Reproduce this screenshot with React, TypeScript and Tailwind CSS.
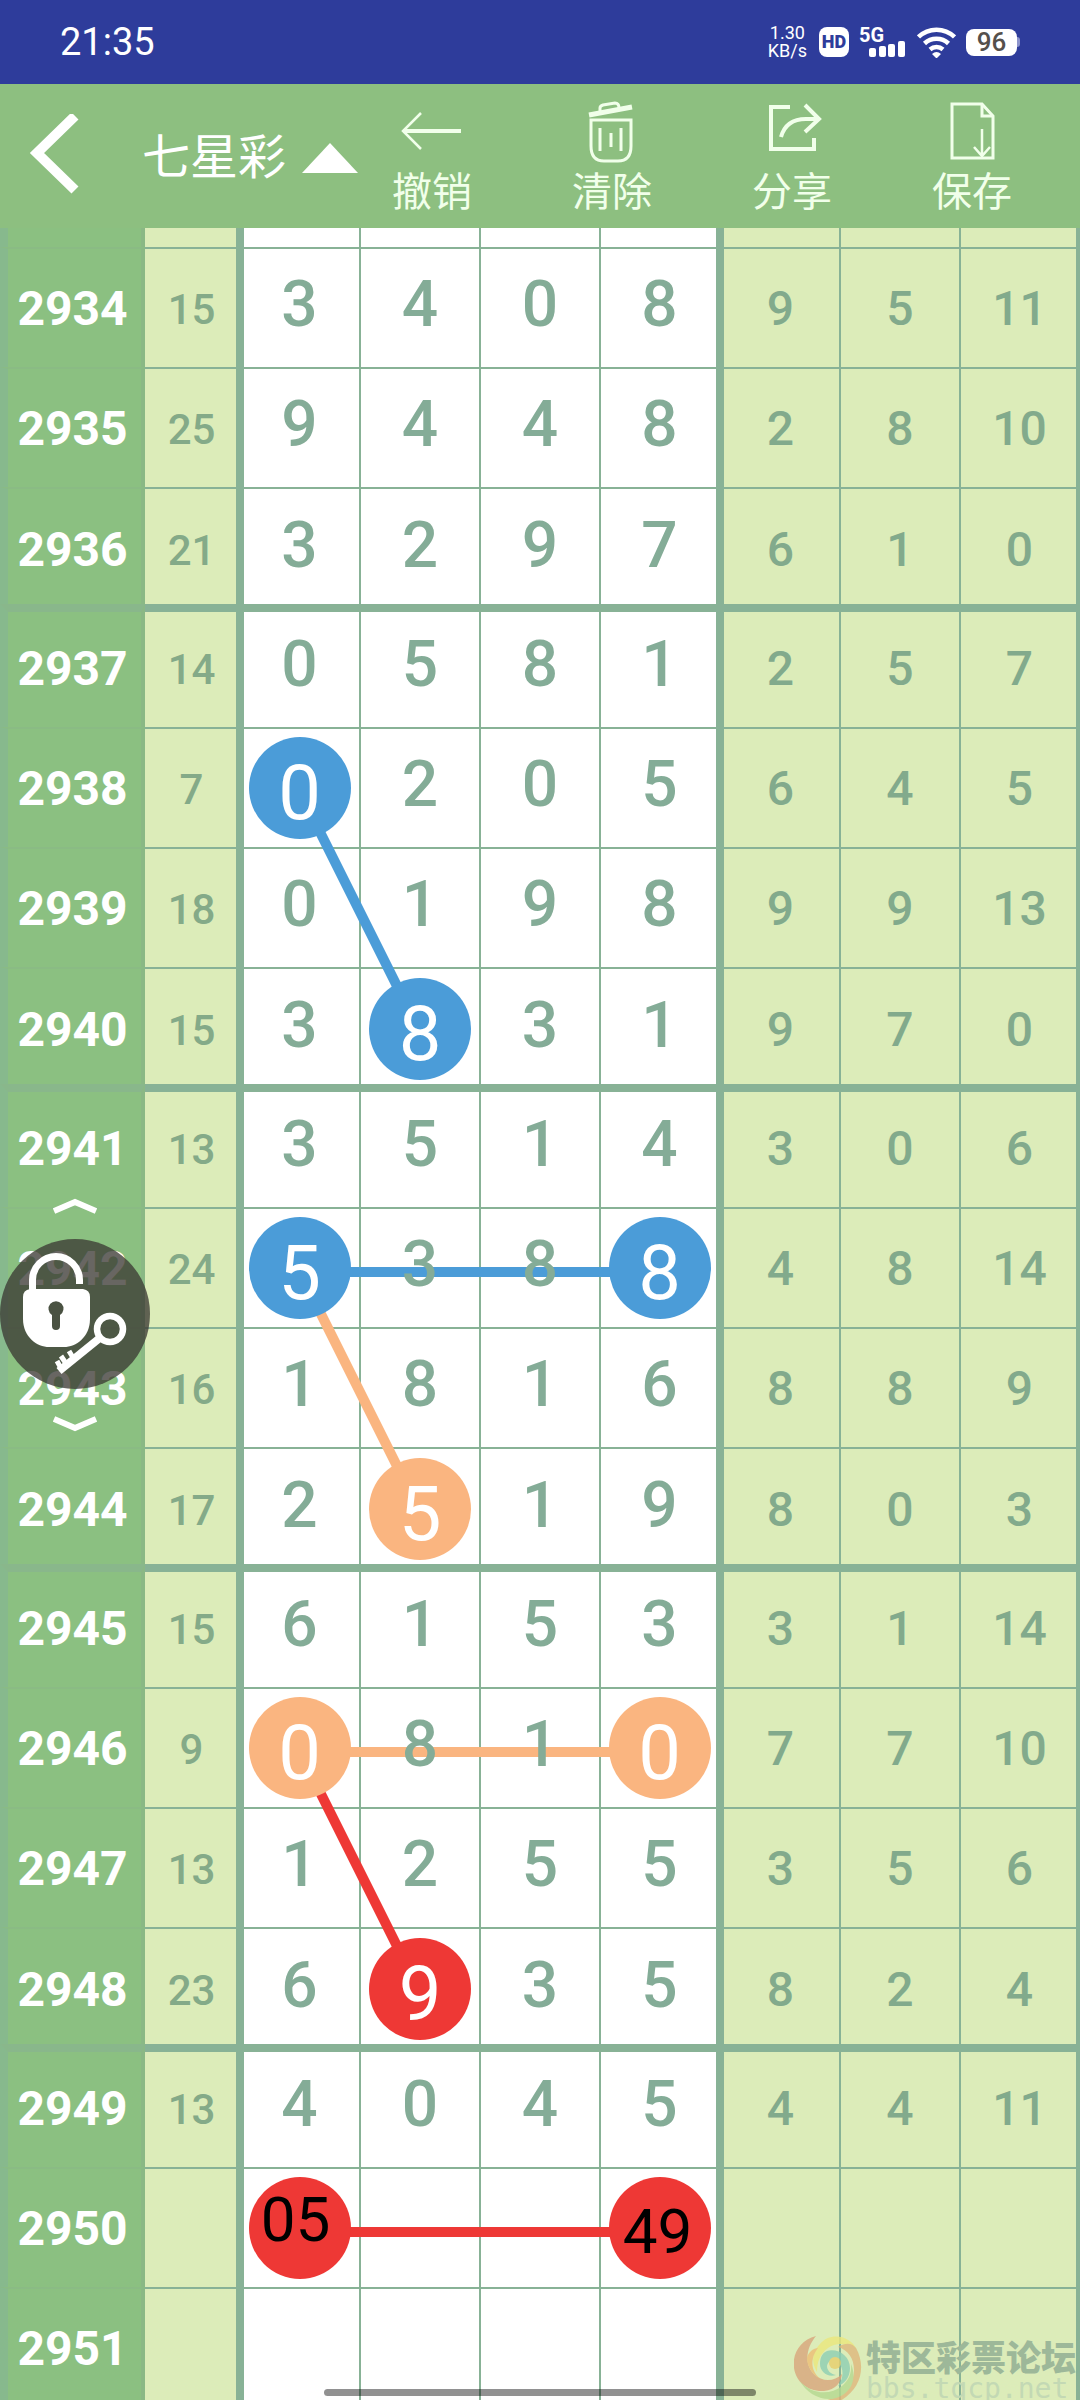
import { useState } from 'react';
import clsx from 'clsx';

type Color = 'blue' | 'orange' | 'red';

interface Draw {
  issue: number;
  sum?: number;
  main: string;
  extra: (number | string)[];
}

interface Mark {
  text: string;
  color: Color;
  note?: string;
}

const draws: Draw[] = [
  { issue: 2934, sum: 15, main: '3408', extra: [9, 5, 11] },
  { issue: 2935, sum: 25, main: '9448', extra: [2, 8, 10] },
  { issue: 2936, sum: 21, main: '3297', extra: [6, 1, 0] },
  { issue: 2937, sum: 14, main: '0581', extra: [2, 5, 7] },
  { issue: 2938, sum: 7, main: '0205', extra: [6, 4, 5] },
  { issue: 2939, sum: 18, main: '0198', extra: [9, 9, 13] },
  { issue: 2940, sum: 15, main: '3831', extra: [9, 7, 0] },
  { issue: 2941, sum: 13, main: '3514', extra: [3, 0, 6] },
  { issue: 2942, sum: 24, main: '5388', extra: [4, 8, 14] },
  { issue: 2943, sum: 16, main: '1816', extra: [8, 8, 9] },
  { issue: 2944, sum: 17, main: '2519', extra: [8, 0, 3] },
  { issue: 2945, sum: 15, main: '6153', extra: [3, 1, 14] },
  { issue: 2946, sum: 9, main: '0810', extra: [7, 7, 10] },
  { issue: 2947, sum: 13, main: '1255', extra: [3, 5, 6] },
  { issue: 2948, sum: 23, main: '6935', extra: [8, 2, 4] },
  { issue: 2949, sum: 13, main: '4045', extra: [4, 4, 11] },
  { issue: 2950, main: '    ', extra: ['', '', ''] },
  { issue: 2951, main: '    ', extra: ['', '', ''] },
];

// keyed by issue-column
const initialMarks: Record<string, Mark> = {
  '2938-0': { text: '0', color: 'blue' },
  '2940-1': { text: '8', color: 'blue' },
  '2942-0': { text: '5', color: 'blue' },
  '2942-3': { text: '8', color: 'blue' },
  '2944-1': { text: '5', color: 'orange' },
  '2946-0': { text: '0', color: 'orange' },
  '2946-3': { text: '0', color: 'orange' },
  '2948-1': { text: '9', color: 'red' },
  '2950-0': { text: '05', color: 'red', note: 'pb-4 pr-2' },
  '2950-3': { text: '49', color: 'red', note: 'pt-2 pr-1' },
};

// [from issue, from column, to issue, to column, colour]
const initialLines: [number, number, number, number, Color][] = [
  [2938, 0, 2940, 1, 'blue'],
  [2942, 0, 2944, 1, 'orange'],
  [2942, 0, 2942, 3, 'blue'],
  [2946, 0, 2948, 1, 'red'],
  [2946, 0, 2946, 3, 'orange'],
  [2950, 0, 2950, 3, 'red'],
];

const fill = { blue: 'bg-[#4b9cd8]', orange: 'bg-[#fab580]', red: 'bg-[#ee3835]' };
const stroke = { blue: 'stroke-[#4b9cd8]', orange: 'stroke-[#fab580]', red: 'stroke-[#ee3835]' };

const lineX = (col: number) => `${((300 + col * 120) / 1080) * 100}%`;
const lineY = (issue: number) => 84 + (issue - 2934) * 120;

const isThick = (issue: number) => issue % 4 === 1;

function StatusBar() {
  return (
    <div className="flex h-[84px] shrink-0 items-center justify-between bg-[#2e3c9b] pl-15 pr-15 text-white">
      <span className="text-[38px] leading-none">21:35</span>
      <div className="flex items-center">
        <div className="mr-3 text-center text-[18px] leading-[18px]">
          <div>1.30</div>
          <div>KB/s</div>
        </div>
        <span className="mr-2.5 flex h-[30px] w-[30px] items-center justify-center rounded-lg bg-white text-[18px] font-black leading-none text-[#2e3c9b]">
          HD
        </span>
        <div className="relative mr-3 h-[30px] w-[46px]">
          <span className="absolute left-0 top-0 text-[20px] font-bold leading-[16px]">5G</span>
          <svg className="absolute inset-0" width="46" height="30" fill="#fff">
            <rect x="10" y="21" width="7" height="9" rx="2" />
            <rect x="20" y="19" width="7" height="11" rx="2" />
            <rect x="29" y="17" width="7" height="13" rx="2" />
            <rect x="39" y="14" width="7" height="16" rx="2" />
          </svg>
        </div>
        <svg className="mr-2.5" width="39" height="31" viewBox="0 0 39 31" fill="none" stroke="#fff" strokeWidth="4.500">
          <path d="M1.500 10a26 26 0 0 1 36 0" />
          <path d="M7.500 16.500a17.500 17.500 0 0 1 24 0" />
          <path d="M13 22.500a10 10 0 0 1 13 0" />
          <path d="M15 27q4.500-4 9 0l-4.500 4.500z" fill="#fff" stroke="none" />
        </svg>
        <span className="flex h-[27px] w-[51px] items-center justify-center rounded-lg bg-white text-[26px] font-medium leading-none text-[#55504c]">
          96
        </span>
        <span className="h-[10px] w-[3px] rounded-r bg-[#8d94cc]" />
      </div>
    </div>
  );
}

const tools = [
  {
    label: '撤销',
    icon: (
      <>
        <path d="M3 34H61" strokeWidth="4" />
        <path d="M21 16L3 34L21 52" strokeWidth="2.500" />
      </>
    ),
  },
  {
    label: '清除',
    icon: (
      <>
        <path d="M9 18L52 10" strokeWidth="5" />
        <path d="M20 15V11q0-2 3-3l12-2q4 0 4 5" strokeWidth="3" />
        <path d="M11 23H51V49Q51 64 38 64H24Q11 64 11 49Z" strokeWidth="3" />
        <path d="M20 31V54M31 36V50M41 31V54" strokeWidth="3" />
      </>
    ),
  },
  {
    label: '分享',
    icon: (
      <>
        <path d="M30 10H11V52H54V41" strokeWidth="4" />
        <path d="M21 40Q26 22 46 22H58" strokeWidth="4" />
        <path d="M45 8L59 22L45 35" strokeWidth="4" />
      </>
    ),
  },
  {
    label: '保存',
    icon: (
      <>
        <path d="M42 7H12V61H53V19Z" strokeWidth="3" />
        <path d="M42 7V19H53" strokeWidth="3" />
        <path d="M42 32V59M34 50L42 59L50 50" strokeWidth="2.500" />
      </>
    ),
  },
];

function Toolbar({ onTool }: { onTool: (label: string) => void }) {
  return (
    <header className="flex h-[144px] shrink-0 items-center bg-[#8dbf80] text-white">
      <button aria-label="返回" className="ml-7 w-[54px]">
        <svg width="54" height="84" viewBox="0 0 54 84" fill="none" stroke="#fff" strokeWidth="10">
          <path d="M47 2L9 39L47 76" />
        </svg>
      </button>
      <button className="ml-15 flex items-center gap-4 pt-1 text-[48px] leading-none">
        七星彩
        <svg width="56" height="30" viewBox="0 0 56 30" fill="#fff">
          <path d="M28 0L56 30H0Z" />
        </svg>
      </button>
      <div className="ml-auto mr-12 flex gap-15">
        {tools.map(t => (
          <button
            key={t.label}
            onClick={() => onTool(t.label)}
            className="flex w-[120px] flex-col items-center gap-2.5 text-[40px] leading-[44px] text-[#f1ffea]"
          >
            <svg className="overflow-visible" width="64" height="64" viewBox="0 0 64 64" fill="none" stroke="currentColor">
              {t.icon}
            </svg>
            {t.label}
          </button>
        ))}
      </div>
    </header>
  );
}

function MainCell({ value, mark }: { value: string; mark?: Mark }) {
  if (!mark) {
    return <span className="relative z-10 block pb-1.5 text-[64px] font-medium leading-none">{value}</span>;
  }
  return (
    <span
      className={clsx(
        'relative z-10 mx-auto flex h-[102px] w-[102px] items-center justify-center rounded-full leading-none',
        fill[mark.color],
        mark.note ? 'text-[62px] text-black' : 'pt-2.5 text-[76px] text-white',
        mark.note,
      )}
    >
      {mark.text}
    </span>
  );
}

function LockWidget() {
  const [locked, setLocked] = useState(false);
  return (
    <div className="absolute left-0 top-[963px] z-20 flex w-[150px] flex-col items-center gap-5">
      <button aria-label="上移" className="h-7">
        <svg width="44" height="28" viewBox="0 0 44 28" fill="none" stroke="#fff" strokeWidth="6">
          <path d="M1 20L22 11L43 20" />
        </svg>
      </button>
      <button
        aria-label="锁定"
        aria-pressed={locked}
        onClick={() => setLocked(!locked)}
        className="h-[150px] w-[150px] rounded-full bg-[#3a3833]/77"
      >
        <svg width="150" height="150" viewBox="0 0 150 150" fill="none" stroke="#fff">
          <path d="M32.500 54V41a23.500 23.500 0 0 1 47 0V45" strokeWidth="7" />
          <path
            d="M30 50H83Q90 51 90 58V80C90 98 76 108 64 108H49C37 108 23 98 23 80V58Q23 51 30 50Z"
            fill="#fff"
            stroke="none"
          />
          <path d="M52 76a7.500 7.500 0 1 1 8 0V87a4 4 0 0 1-8 0Z" fill="#4a5242" stroke="none" />
          <circle cx="110" cy="90" r="13" strokeWidth="6.500" />
          <path d="M101 98L59 132" strokeWidth="8" />
          <path d="M62 131L57 122M67 126L61 117M75 122L69 112" strokeWidth="5" />
        </svg>
      </button>
      <button aria-label="下移" className="h-7">
        <svg width="44" height="28" viewBox="0 0 44 28" fill="none" stroke="#fff" strokeWidth="6">
          <path d="M1 10L22 19L43 10" />
        </svg>
      </button>
    </div>
  );
}

function Watermark() {
  return (
    <div className="pointer-events-none absolute bottom-0 right-0 z-20 flex h-[64px] w-[286px] gap-1 overflow-hidden">
      <svg className="shrink-0" width="68" height="64" viewBox="0 0 68 64" fill="none" opacity="0.8">
        <path d="M22 0C6 4-2 18 0 32C2 46 14 56 30 55C42 54 47 46 48 38C40 46 28 46 20 38C10 28 12 12 22 0Z" fill="#d9a67c" />
        <path d="M26 8C36-4 56-1 63 14C55 7 42 6 34 12C26 18 23 26 23 36C17 26 18 16 26 8Z" fill="#ece87c" />
        <path d="M62 12C72 30 68 54 44 66H26C46 62 60 50 60 34C60 22 54 14 44 11C52 6 58 7 62 12Z" fill="#dfb77c" />
        <path d="M6 45C16 58 36 60 48 50C54 45 58 38 57 28C64 44 56 60 38 63C24 64 12 56 6 45Z" fill="#b5d990" />
        <path d="M33 15C44 12 56 20 56 32C56 42 50 48 44 50C50 42 50 32 44 26C40 22 34 24 33 30C33 34 36 38 42 39C34 42 26 36 26 28C26 22 28 17 33 15Z" fill="#8ecfb4" />
        <path d="M24 12C16 22 16 36 28 44C20 40 13 32 13 22C14 16 20 12 24 12Z" fill="#eebd74" />
        <circle cx="41" cy="27" r="6" fill="#e8cf6c" />
      </svg>
      <div className="whitespace-nowrap pt-1.5">
        <div className="text-[35px] font-black leading-[35px] text-[#9db899]">特区彩票论坛</div>
        <div className="font-['DejaVu_Sans_Mono',monospace] text-[28px] leading-[23px] text-[#c3d9b4]">bbs.tqcp.net</div>
      </div>
    </div>
  );
}

export default function App() {
  const [marks, setMarks] = useState(initialMarks);
  const [lines, setLines] = useState(initialLines);

  const handleTool = (label: string) => {
    if (label === '撤销') setLines(prev => prev.slice(0, -1));
    if (label === '清除') {
      setMarks({});
      setLines([]);
    }
  };

  return (
    <div className="flex h-screen flex-col overflow-hidden bg-white font-[Roboto,'Noto_Sans_CJK_SC',sans-serif]">
      <StatusBar />
      <Toolbar onTool={handleTool} />

      <main className="relative flex-1 overflow-hidden">
        <table className="w-full table-fixed border-separate border-spacing-0 text-center">
          <colgroup>
            <col className="w-[145px]" />
            <col className="w-[91px]" />
            <col className="w-[123px]" />
            <col className="w-[120px]" />
            <col className="w-[120px]" />
            <col className="w-[117px]" />
            <col className="w-[123px]" />
            <col className="w-[120px]" />
            <col className="w-[121px]" />
          </colgroup>
          <tbody>
            {/* tail of the row scrolled under the toolbar */}
            <tr className="h-[19px]">
              <td className="border-l-8 border-r-4 border-l-[#87b98d] border-r-[#8ab885] bg-[#8bc081]" />
              <td className="bg-[#dcecb9]" />
              {[0, 1, 2, 3].map(i => (
                <td key={i} className={clsx('border-[#88b296] bg-white', i === 0 ? 'border-l-8' : 'border-l-2')} />
              ))}
              {[0, 1, 2].map(i => (
                <td
                  key={i}
                  className={clsx('border-[#88b296] bg-[#dcecb9]', i === 0 ? 'border-l-8' : 'border-l-2', i === 2 && 'border-r-4')}
                />
              ))}
            </tr>
            {draws.map(d => {
              const thick = isThick(d.issue);
              const beforeThick = isThick(d.issue + 1);
              const edge = clsx(thick ? 'border-t-8 pb-1' : 'border-t-2', beforeThick && 'pt-1');
              return (
                <tr key={d.issue} className={thick ? 'h-[123px]' : beforeThick ? 'h-[117px]' : 'h-[120px]'}>
                  <th
                    scope="row"
                    className={clsx(
                      edge,
                      'border-l-8 border-r-4 border-l-[#87b98d] border-r-[#8ab885] bg-[#8bc081] pr-1 text-[48px] font-bold leading-none text-white',
                      thick ? 'border-t-[#89b78b]' : 'border-t-[#8abb84]',
                    )}
                  >
                    <span className="block pt-0.5">{d.issue}</span>
                  </th>
                  <td className={clsx(edge, 'border-[#88b296] bg-[#dcecb9] text-[42px] font-medium leading-none text-[#84aa88]')}>
                    <span className="block pl-0.5 pt-1">{d.sum}</span>
                  </td>
                  {d.main.split('').map((n, i) => (
                    <td
                      key={i}
                      className={clsx(
                        edge,
                        'border-[#88b296] bg-white text-[#84ac97]',
                        i === 0 ? 'border-l-8 pr-1' : 'border-l-2',
                        i === 3 && 'pl-0.5',
                      )}
                    >
                      <MainCell value={n} mark={marks[`${d.issue}-${i}`]} />
                    </td>
                  ))}
                  {d.extra.map((n, i) => (
                    <td
                      key={i}
                      className={clsx(
                        edge,
                        'border-[#88b296] bg-[#dcecb9] text-[48px] font-medium leading-none text-[#82aa8c]',
                        i === 0 ? 'border-l-8 pr-0.5' : 'border-l-2',
                        i === 2 && 'border-r-4 pl-0.5',
                      )}
                    >
                      <span className="block pt-0.5">{n}</span>
                    </td>
                  ))}
                </tr>
              );
            })}
          </tbody>
        </table>

        {/* trend lines run over the grid but under the digits */}
        <svg className="pointer-events-none absolute inset-0 h-full w-full" strokeWidth="10">
          {lines.map(([fromIssue, fromCol, toIssue, toCol, color]) => (
            <line
              key={`${fromIssue}-${fromCol}-${toIssue}-${toCol}`}
              className={stroke[color]}
              x1={lineX(fromCol)}
              y1={lineY(fromIssue)}
              x2={lineX(toCol)}
              y2={lineY(toIssue)}
            />
          ))}
        </svg>

        <LockWidget />
        <Watermark />
        <div className="absolute bottom-1 left-[30%] z-30 h-[7px] w-[40%] rounded-full bg-black/43" />
      </main>
    </div>
  );
}
